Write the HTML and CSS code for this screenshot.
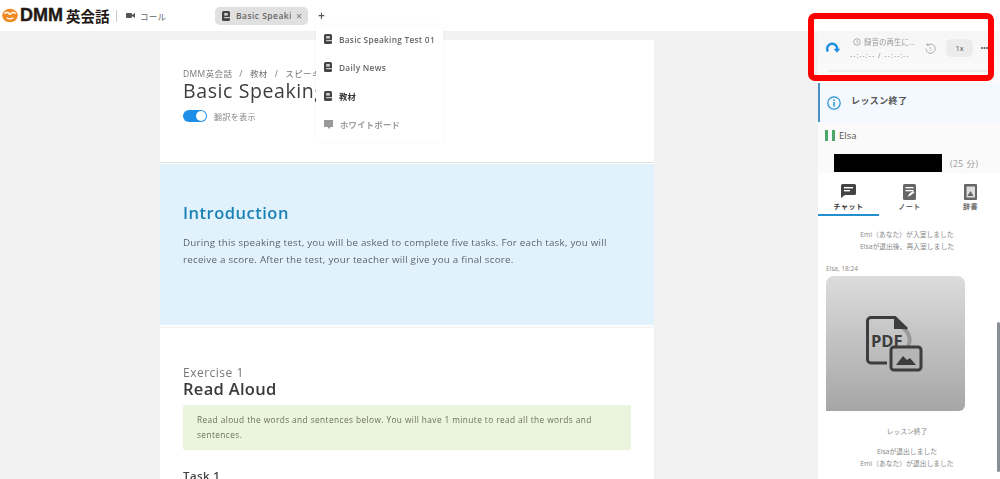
FILE: index.html
```html
<!DOCTYPE html>
<html lang="ja">
<head>
<meta charset="utf-8">
<title>DMM英会話</title>
<link rel="stylesheet" href="styles.css">
</head>
<body>
<div class="page">
  <header class="topbar">
    <div class="brand">
      <svg class="logo-mark" width="16" height="15" viewBox="0 0 17 15"><ellipse cx="8.500" cy="7.500" rx="8.300" ry="7.200" fill="#f08a24"/><path d="M2.500 5.500a3 2.600 0 0 1 5.500 1 M9 6.500a3 2.600 0 0 1 5.500-1" fill="none" stroke="#fff" stroke-width="1.500"/><path d="M5 10q3.500 2.200 7 0" stroke="#fff" stroke-width="1.400" fill="none"/></svg>
      <span class="brand-name"><span class="dmm">DMM</span>英会話</span>
    </div>
    <span class="divider"></span>
    <div class="call">
      <svg width="9" height="7" viewBox="0 0 9 7"><rect y="1" width="6" height="5" rx="1" fill="#555"/><path d="M6 3l3-2v5l-3-2z" fill="#555"/></svg>
      <span>コール</span>
    </div>
    <div class="tab">
      <svg class="doc-icon" width="8" height="10" viewBox="0 0 8 10"><use href="#book"/></svg>
      <span class="tab-label">Basic Speaki</span>
      <span class="tab-close">×</span>
    </div>
    <span class="plus">+</span>
  </header>

  <svg class="defs" width="0" height="0"><defs><g id="book"><rect width="8" height="10" rx="1.500" fill="#444"/><rect x="2.200" y="2" width="3.600" height="2.600" fill="#ccc"/><rect x="2.200" y="6" width="5.800" height="1.200" fill="#ccc"/></g></defs></svg>

  <div class="content">
    <main class="workspace">
      <article class="doc">
        <section class="doc-head">
          <div class="crumbs"><span>DMM英会話</span><span>/</span><span>教材</span><span>/</span><span>スピーキ</span></div>
          <h1>Basic Speaking Test 01</h1>
          <div class="toggle-row"><span class="toggle"><span class="knob"></span></span><span>翻訳を表示</span></div>
        </section>
        <section class="intro">
          <h2>Introduction</h2>
          <p>During this speaking test, you will be asked to complete five tasks. For each task, you will receive a score. After the test, your teacher will give you a final score.</p>
        </section>
        <section class="exercise">
          <div class="ex-num">Exercise 1</div>
          <h3>Read Aloud</h3>
          <p class="note">Read aloud the words and sentences below. You will have 1 minute to read all the words and sentences.</p>
          <h4>Task 1</h4>
        </section>
      </article>
    </main>

    <aside class="side">
      <div class="player">
        <div class="player-row">
          <svg class="reload" width="15" height="13" viewBox="0 0 15 13"><path d="M2 9.500A5 5 0 1 1 11 8" fill="none" stroke="#1f8fe0" stroke-width="2.400"/><path d="M7.600 6.800h6.600l-3.200 4z" fill="#1f8fe0"/></svg>
          <div class="player-info">
            <div class="player-title"><svg class="clock" width="8" height="8" viewBox="0 0 8 8"><circle cx="4" cy="4" r="3.300" fill="none" stroke="#999" stroke-width=".8"/><path d="M4 2v2.200l1.400.8" fill="none" stroke="#999" stroke-width=".7"/></svg><span>録音の再生に...</span></div>
            <div class="player-time">--:--:-- / --:--:--</div>
          </div>
          <svg class="replay" width="11" height="12" viewBox="0 0 11 12"><path d="M2.600 3.200A4.600 4.600 0 1 1 1 6.600" fill="none" stroke="#aaa" stroke-width="1"/><path d="M1.400 1l.6 3 2.800-.8z" fill="#aaa"/><text x="5.500" y="9" font-size="4.500" text-anchor="middle" fill="#aaa" font-family="Open Sans">5</text></svg>
          <span class="speed">1x</span>
          <svg class="more" width="7" height="2" viewBox="0 0 7 2"><circle cx="1" cy="1" r="1" fill="#555"/><circle cx="3.500" cy="1" r="1" fill="#555"/><circle cx="6" cy="1" r="1" fill="#555"/></svg>
        </div>
        <div class="player-track"></div>
      </div>
      <div class="lesson-end">
        <svg width="14" height="14" viewBox="0 0 14 14"><circle cx="7" cy="7" r="6.200" fill="none" stroke="#1f8fd0" stroke-width="1.200"/><rect x="6.300" y="6" width="1.500" height="4.600" fill="#1f8fd0"/><rect x="6.300" y="3.400" width="1.500" height="1.600" fill="#1f8fd0"/></svg>
        <span class="lesson-end-label">レッスン終了</span>
      </div>
      <div class="teacher"><span class="bars"><i></i><i></i></span><span>Elsa</span></div>
      <div class="redacted-row"><span class="redacted"></span><span class="mins">(25 分)</span></div>
      <nav class="tabs">
        <div class="side-tab active">
          <svg width="15" height="14" viewBox="0 0 15 14"><path d="M1.500 0h12A1.500 1.500 0 0 1 15 1.500v8A1.500 1.500 0 0 1 13.500 11H4l-4 3V1.500A1.500 1.500 0 0 1 1.500 0z" fill="#444"/><rect x="3" y="3" width="9" height="1.400" fill="#fff"/><rect x="3" y="6" width="6" height="1.400" fill="#fff"/></svg>
          <span>チャット</span>
        </div>
        <div class="side-tab">
          <svg width="13" height="16" viewBox="0 0 13 16"><rect width="13" height="16" rx="1.500" fill="#666"/><rect x="2.500" y="3" width="8" height="1.300" fill="#fff"/><rect x="2.500" y="6" width="8" height="1.300" fill="#fff"/><path d="M5 13l1-3 4-3 1.500 1.500-4 3z" fill="#fff"/></svg>
          <span>ノート</span>
        </div>
        <div class="side-tab">
          <svg width="13" height="16" viewBox="0 0 13 16"><rect width="13" height="16" rx="1" fill="#666"/><rect x="2.500" y="2.500" width="8.500" height="11" fill="#ddd"/><path d="M3.500 12l3-5 3 5z" fill="#666"/></svg>
          <span>辞書</span>
        </div>
      </nav>
      <div class="chat">
        <p class="sys first">Emi（あなた）が入室しました</p>
        <p class="sys">Elsaが退出後、再入室しました</p>
        <div class="msg-meta">Elsa, 18:24</div>
        <div class="pdf-card">
          <svg width="58" height="56" viewBox="0 0 58 56">
            <path d="M30 10a14 14 0 0 1 12 22" fill="none" stroke="#999" stroke-width="4"/>
            <path d="M22 47H6a3.500 3.500 0 0 1-3.500-3.500V5A3.500 3.500 0 0 1 6 1.500h24L42 13" fill="none" stroke="#3d3d3d" stroke-width="3"/>
            <path d="M29 1.500V13h13z" fill="#3d3d3d"/>
            <text x="6" y="31" font-family="Open Sans" font-weight="700" font-size="16.500" fill="#3d3d3d">PDF</text>
            <rect x="26" y="31" width="30" height="23" rx="3" fill="#b5b5b5" stroke="#3d3d3d" stroke-width="3"/>
            <path d="M31 49l7-9 4 4 3-2 6 7z" fill="#3d3d3d"/>
          </svg>
        </div>
        <p class="sys end">レッスン終了</p>
        <p class="sys after">Elsaが退出しました</p>
        <p class="sys">Emi（あなた）が退出しました</p>
      </div>
      <div class="scrollbar"><span class="thumb"></span></div>
    </aside>
  </div>

  <div class="add-menu">
    <div class="menu-item dark"><svg width="8" height="10" viewBox="0 0 8 10"><use href="#book"/></svg><span>Basic Speaking Test 01</span></div>
    <div class="menu-item dark"><svg width="8" height="10" viewBox="0 0 8 10"><use href="#book"/></svg><span>Daily News</span></div>
    <div class="menu-item darker"><svg width="8" height="10" viewBox="0 0 8 10"><use href="#book"/></svg><span>教材</span></div>
    <div class="menu-item muted"><svg width="9" height="9" viewBox="0 0 9 9"><path d="M0 0h9v7H6.500L5 9 3.500 7H0z" fill="#999"/></svg><span>ホワイトボード</span></div>
  </div>

  <div class="highlight"></div>
</div>
</body>
</html>
```

FILE: styles.css
```css
* { box-sizing: border-box; }
html, body { margin: 0; height: 100%; }
body { font-family: "Open Sans", "Noto Sans CJK JP", sans-serif; color: #444; background: #f2f2f2; overflow: hidden; }
p, h1, h2, h3, h4 { margin: 0; }
.defs { position: absolute; }
.page { position: relative; width: 1000px; height: 479px; overflow: hidden; display: flex; flex-direction: column; filter: blur(.35px); }

.topbar { height: 31px; flex: none; background: #fff; display: flex; align-items: center; padding-left: 2px; }
.brand { display: flex; align-items: center; gap: 2px; width: 114px; }
.brand-name { font-family: "Liberation Sans", "Noto Sans CJK JP", sans-serif; font-weight: 700; font-size: 14.500px; color: #231815; white-space: nowrap; display: flex; align-items: center; gap: 3px; }
.dmm { font-size: 18px; -webkit-text-stroke: .4px #231815; letter-spacing: 0; }
.divider { width: 1px; height: 12px; background: #ccc; margin-right: 9px; }
.call { display: flex; align-items: center; gap: 5px; font-size: 8.500px; color: #666; width: 89px; letter-spacing: .3px; }
.tab { width: 93px; height: 18px; background: #e0e0e0; border-radius: 5px; display: flex; align-items: center; padding-left: 7px; font-size: 8.500px; font-weight: 600; color: #666; letter-spacing: .45px; }
.tab-label { margin-left: 6px; width: 55px; white-space: nowrap; overflow: hidden; }
.tab-close { margin-left: 5px; font-size: 11px; color: #777; font-weight: 400; }
.plus { margin-left: 10px; font-size: 12px; font-weight: 600; color: #555; }

.content { flex: 1; min-height: 0; display: flex; }
.workspace { flex: 1; min-width: 0; padding: 9px 0 0 160px; }
.doc { width: 494px; background: #fff; }
.doc-head { height: 123px; padding: 28px 23px 0; border-bottom: 1px solid #e0e0e0; overflow: hidden; }
.crumbs { display: flex; gap: 7px; font-size: 8.500px; line-height: 12px; color: #777; letter-spacing: .4px; white-space: nowrap; }
.doc-head h1 { font-size: 19.500px; line-height: 22px; font-weight: 400; color: #3d3d3d; letter-spacing: .6px; white-space: nowrap; }
.toggle-row { display: flex; align-items: center; gap: 7px; margin-top: 8px; font-size: 8px; color: #888; letter-spacing: .4px; }
.toggle { width: 24px; height: 12px; border-radius: 6px; background: #1e8fe8; display: flex; justify-content: flex-end; padding: 1px; }
.knob { width: 10px; height: 10px; border-radius: 50%; background: #fff; }

.intro { height: 161px; margin-top: 1px; background: #e1f2fd; padding: 38px 23px 0; }
.intro h2 { font-size: 16.500px; line-height: 22px; font-weight: 600; color: #1b81b5; letter-spacing: .5px; }
.intro p { margin-top: 11px; font-size: 9.800px; line-height: 16.500px; color: #5a6570; letter-spacing: .23px; }
.exercise { margin-top: 3px; padding: 38px 23px 0; background: #fff; height: 160px; overflow: hidden; box-shadow: 0 -1px 2px #eee; }
.ex-num { font-size: 12px; line-height: 14px; color: #777; letter-spacing: .5px; }
.exercise h3 { font-size: 16.500px; line-height: 18px; font-weight: 600; color: #3a3a3a; letter-spacing: .3px; }
.note { margin-top: 7px; background: #ebf4dc; border-radius: 2px; padding: 8px 14px 8px; font-size: 8.300px; line-height: 14.500px; color: #6b705f; letter-spacing: .41px; }
.exercise h4 { margin-top: 18px; font-size: 11.500px; line-height: 16px; font-weight: 600; color: #444; letter-spacing: .4px; }

.side { position: relative; width: 182px; flex: none; background: #fff; display: flex; flex-direction: column; }
.player { height: 52px; flex: none; background: linear-gradient(#f6f6f6, #fbfbfb); }
.player-row { height: 34px; padding-left: 8px; display: flex; align-items: center; }
.reload { flex: none; }
.player-info { width: 62px; margin-left: 9px; flex: none; }
.player-title { display: flex; align-items: center; gap: 3px; padding-left: 3px; font-size: 7.500px; line-height: 12px; color: #999; white-space: nowrap; }
.clock { flex: none; }
.player-time { margin-top: 3px; font-size: 7px; line-height: 9px; color: #888; letter-spacing: 1px; white-space: nowrap; }
.replay { margin-left: 13px; flex: none; }
.speed { width: 27px; height: 18px; margin-left: 10px; border-radius: 5px; background: #ececec; font-size: 7.500px; line-height: 18px; text-align: center; color: #555; flex: none; }
.more { margin-left: 8px; flex: none; }
.player-track { height: 2px; margin: 5px 7px 0 10px; background: #ececec; }
.lesson-end { height: 39px; flex: none; background: #f3f9fe; border-left: 2px solid #4a90c2; display: flex; align-items: center; gap: 10px; padding-left: 7px; font-size: 9px; font-weight: 700; color: #555; letter-spacing: .4px; }
.lesson-end-label { margin-bottom: 4px; }
.teacher { height: 31px; flex: none; display: flex; align-items: center; gap: 4px; padding: 0 0 5px 7px; font-size: 9.500px; color: #555; background: #fafafa; }
.bars { display: flex; gap: 4px; }
.bars i { width: 3px; height: 11px; background: #4ea76a; }
.redacted-row { height: 20px; flex: none; display: flex; align-items: center; gap: 8px; padding-left: 16px; background: #fafafa; }
.redacted { width: 108px; height: 18px; background: #000; }
.mins { font-size: 8.500px; color: #999; letter-spacing: .5px; }
.tabs { height: 43px; flex: none; display: flex; padding-top: 1px; background: #fff; }
.side-tab { width: 61px; flex: none; display: flex; flex-direction: column; align-items: center; justify-content: space-between; padding: 10px 0 3px; font-size: 7px; font-weight: 600; color: #666; letter-spacing: .5px; border-bottom: 2px solid transparent; }
.side-tab.active { border-bottom-color: #1f8fd0; color: #333; }
.chat { flex: 1; min-height: 0; padding: 0 0 0 8px; overflow: hidden; background: #fff; }
.sys { width: 162px; text-align: center; font-size: 6.800px; line-height: 12px; color: #888; white-space: nowrap; }
.sys.first { margin-top: 13px; }
.msg-meta { margin-top: 11px; font-size: 6.500px; line-height: 10px; color: #888; }
.pdf-card { width: 139px; height: 135px; margin-top: 2px; border-radius: 8px 8px 6px 0; background: linear-gradient(#dcdcdc, #a6a6a6); display: flex; align-items: center; justify-content: center; padding-right: 3px; }
.sys.end { margin-top: 15px; }
.sys.after { margin-top: 8px; }
.scrollbar { position: absolute; top: 190px; right: 0; bottom: 0; width: 5px; background: #fff; }
.thumb { position: absolute; top: 101px; bottom: 7px; left: 2px; width: 3px; background: #8a8f96; border-radius: 2px; }

.add-menu { position: absolute; left: 316px; top: 25px; width: 127px; height: 117px; background: #fff; display: flex; flex-direction: column; box-shadow: 0 0 4px rgba(0,0,0,.04); }
.menu-item { height: 28.300px; flex: none; display: flex; align-items: center; gap: 7px; padding-left: 8px; font-size: 8.300px; font-weight: 600; letter-spacing: .28px; white-space: nowrap; }
.menu-item.dark { color: #666; }
.menu-item.darker { color: #333; font-weight: 700; }
.menu-item.muted { color: #999; }

.highlight { position: absolute; left: 808px; top: 13px; width: 186px; height: 68px; border: 6px solid #f00; border-radius: 7px; }
```
